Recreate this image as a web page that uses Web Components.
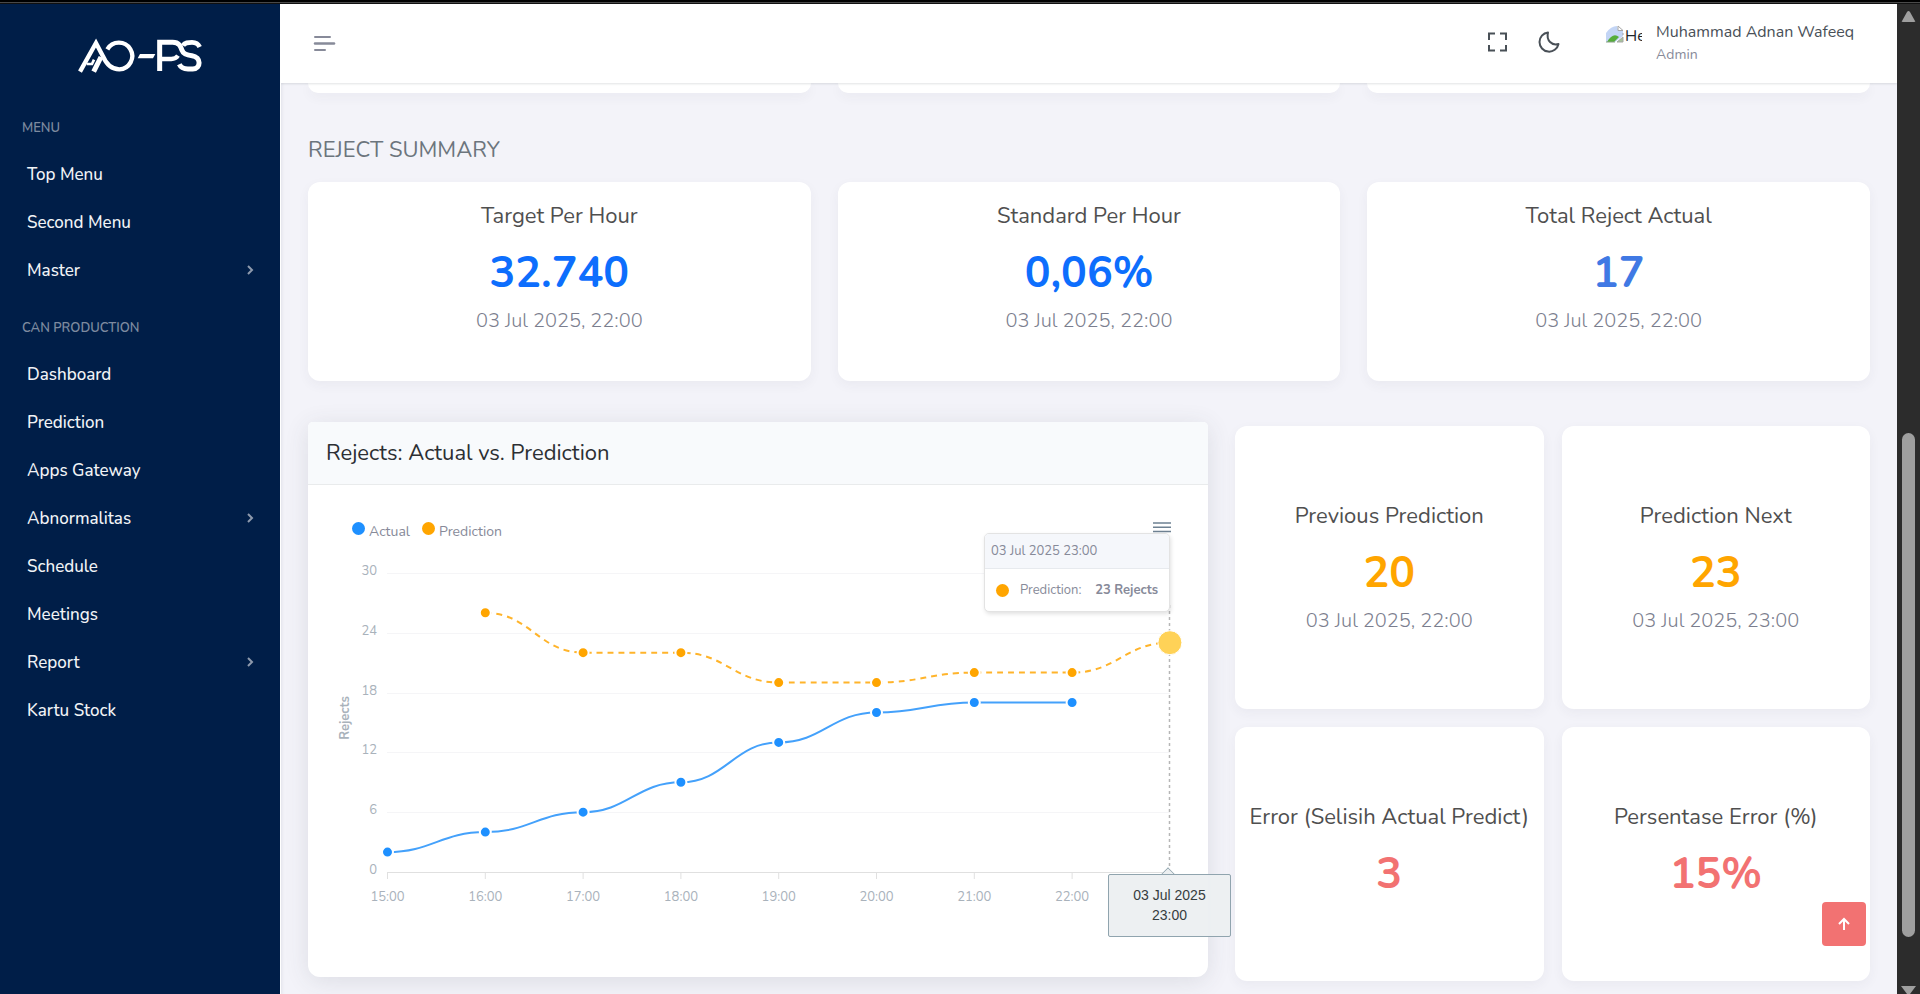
<!DOCTYPE html>
<html lang="en">
<head>
<meta charset="utf-8">
<title>AO-PS Dashboard</title>
<style>
  body { margin: 0; background: #f3f3f9; font-family: Nunito, "Open Sans", "Noto Sans", sans-serif; color: #495057; }
</style>
</head>
<body>
<ao-app></ao-app>

<script>
const define = (name, html, setup) => customElements.define(name, class extends HTMLElement {
  connectedCallback() {
    if (this.shadowRoot) return;
    const t = document.createElement('template');
    t.innerHTML = typeof html === 'function' ? html(this) : html;
    this.attachShadow({ mode: 'open' }).append(t.content.cloneNode(true));
    if (setup) setup(this);
  }
});

define('ao-logo', `
  <style>:host { display: block; } svg { display: block; }</style>
  <svg width="160" height="60" viewBox="0 0 480 180" fill="none" stroke="#fff" stroke-width="13" role="img" aria-label="AO-PS">
    <path d="M60 140 L108 54 L128 92 C138 116 154 133 178 133 A40 40 0 1 0 142 73" stroke-linejoin="miter"/>
    <path d="M101 140 L123 96" stroke-width="15"/>
    <path d="M80 117 L96 117 L102 104" stroke-width="8"/>
    <path d="M240 87 H286 L279 100 H233 Z" fill="#fff" stroke="none"/>
    <path d="M299 138 V52 H338 C358 52 362 64 366 76 C370 88 384 91 396 92 C424 96 424 131 398 132 H384 C370 132 362 127 358 118" stroke-width="15"/>
    <path d="M304 102 H334 C344 102 350 98 354 92" stroke-width="13"/>
    <path d="M369 62 C374 52 384 52 396 52 C408 52 415 57 419 66" stroke-width="14"/>
  </svg>`);

define('nav-label', `
  <style>:host { display: block; margin: 24px 0 12px; padding-left: 22px; font-size: 13px; line-height: 20px; font-weight: 600; color: #7d8a9f; text-transform: uppercase; }</style>
  <slot></slot>`);

define('nav-item', el => `
  <style>
    :host { display: block; }
    a { display: flex; align-items: center; justify-content: space-between; height: 48px; padding: 0 26px 0 27px; color: #f1f3f6; text-decoration: none; font-size: 17px; font-weight: 500; }
    svg { display: block; }
  </style>
  <a href="#"><span><slot></slot></span>${el.hasAttribute('more') ? `<svg width="8" height="12" viewBox="0 0 8 12" fill="none" stroke="#8e9aad" stroke-width="2"><path d="M2 2 L6 6 L2 10"/></svg>` : ''}</a>`);

define('ao-sidebar', `
  <style>
    :host { display: block; background: #001e48; border-right: 1px solid #fff; box-shadow: 0 2px 4px rgba(15,34,58,.12); position: relative; z-index: 1; }
    ao-logo { padding: 21px 0 13px 60px; }
    nav-label:first-of-type { margin-top: 0; padding-top: 20px; }
  </style>
  <nav aria-label="Main">
    <ao-logo></ao-logo>
    <nav-label>Menu</nav-label>
    <nav-item>Top Menu</nav-item><nav-item>Second Menu</nav-item><nav-item more>Master</nav-item>
    <nav-label>Can Production</nav-label>
    <nav-item>Dashboard</nav-item><nav-item>Prediction</nav-item><nav-item>Apps Gateway</nav-item>
    <nav-item more>Abnormalitas</nav-item><nav-item>Schedule</nav-item><nav-item>Meetings</nav-item>
    <nav-item more>Report</nav-item><nav-item>Kartu Stock</nav-item>
  </nav>`);

define('ao-topbar', `
  <style>
    :host { display: flex; align-items: center; height: 79px; padding: 0 43px 0 32px; box-sizing: border-box; background: #fff; box-shadow: 0 1px 2px rgba(56,65,74,.15); position: relative; z-index: 1; }
    button { border: 0; background: none; padding: 0; margin: 0; display: block; font: inherit; color: inherit; }
    svg { display: block; }
    .end { margin-left: auto; display: flex; align-items: center; }
    .tool { margin-right: 30px; padding-bottom: 4px; }
    .tool + .tool { margin-right: 46px; }
    .user { display: flex; gap: 14px; text-align: left; }
    .avatar { display: flex; width: 36px; height: 36px; gap: 1px; overflow: hidden; font-size: 16px; line-height: 22px; color: #212529; padding-top: 4px; box-sizing: border-box; }
    .avatar svg { flex: none; }
    .name { display: block; font-size: 16px; line-height: 22px; color: #495057; }
    .role { display: block; font-size: 14px; line-height: 24px; color: #878a99; }
  </style>
  <button aria-label="Toggle menu"><svg width="24" height="20" viewBox="0 0 24 20" stroke="#878a99" stroke-width="2" stroke-linecap="round"><path d="M2 3 H17 M2 16 H12"/><path d="M2 9.500 H21" stroke-width="2.500"/></svg></button>
  <div class="end">
    <button class="tool" aria-label="Fullscreen"><svg width="21" height="20" viewBox="0 0 21 20" fill="none" stroke="#495057" stroke-width="2"><path d="M2 8 V1.500 H8 M13 1.500 H19 V8 M19 13 V18.500 H13 M8 18.500 H2 V13"/></svg></button>
    <button class="tool" aria-label="Dark mode"><svg width="22" height="22" viewBox="0 0 22 22" fill="none" stroke="#495057" stroke-width="2" stroke-linejoin="round"><path d="M10 1.500 A9.600 9.600 0 1 0 20.500 13 C14 15 8 9.500 10 1.500 Z"/></svg></button>
    <button class="user">
      <span class="avatar"><svg width="18" height="18" viewBox="0 0 18 18"><path d="M0 17 V8 Q5 1 11 1 L12 5 L17 6 V11 L9 17 Z" fill="#c3d5f5"/><path d="M12 1 L17 5.500 H12 Z" fill="#fff" stroke="#a6a6a6" stroke-width="1"/><path d="M1 17 Q7 7 13 12 L8 17 Z" fill="#55ad3a"/><path d="M17 8 V10 M11 17 H17 V12 Z" fill="#a6c49a" stroke="#a6a6a6"/><path d="M0 17 H9" stroke="#8aa08a"/></svg><span>He</span></span>
      <span><span class="name">Muhammad Adnan Wafeeq</span><span class="role">Admin</span></span>
    </button>
  </div>`);

define('stat-card', el => `
  <style>
    :host { display: block; box-sizing: border-box; background: #fff; border-radius: 12px; box-shadow: 0 4px 12px rgba(56,65,74,.05); padding: var(--pad, 21px 0 45px); text-align: center; }
    h3 { margin: 0; font-size: 22px; line-height: 26px; font-weight: 400; color: #4f4f4f; white-space: nowrap; }
    .value { margin: 18px 0 6px; font-size: 43px; line-height: 53px; font-weight: 700; color: var(--tone, #0d6efd); }
    .time { font-size: 20px; line-height: 30px; font-weight: 300; color: #7b7e8e; }
    p { margin: 0; }
  </style>
  <h3>${el.getAttribute('label')}</h3>
  <p class="value"><slot></slot></p>
  ${el.hasAttribute('time') ? `<p class="time">${el.getAttribute('time')}</p>` : ''}`);

const X = i => 79.5 + i * 97.8;
const Y = v => 317 - v * 9.97;
const smooth = pts => pts.map(([i, v], k) => {
  if (!k) return `M${X(i)} ${Y(v)}`;
  const [pi, pv] = pts[k - 1], d = (X(i) - X(pi)) * 0.45;
  return `C${X(pi) + d} ${Y(pv)} ${X(i) - d} ${Y(v)} ${X(i)} ${Y(v)}`;
}).join(' ');
const dots = (pts, color) => pts.map(([i, v]) => `<circle cx="${X(i)}" cy="${Y(v)}" r="5.500" fill="${color}" stroke="#fff" stroke-width="2"/>`).join('');
const actual = [2, 4, 6, 9, 13, 16, 17, 17].map((v, i) => [i, v]);
const predicted = [26, 22, 22, 19, 19, 20, 20, 23].map((v, i) => [i + 1, v]);

define('reject-chart', `
  <style>
    :host { display: block; position: relative; }
    .top { display: flex; justify-content: space-between; padding: 36px 35px 0 44px; height: 70px; box-sizing: border-box; }
    ul { display: flex; gap: 12px; margin: 0; padding: 0; list-style: none; font-size: 14px; line-height: 22px; color: #878a99; }
    li { display: flex; gap: 4px; }
    i { flex: none; width: 13px; height: 13px; margin-top: 1px; border-radius: 50%; background: var(--c); }
    button { border: 0; background: none; padding: 0; height: 14px; }
    svg { display: block; }
    .plot { width: 100%; height: auto; font-family: inherit; }
    .tip { position: absolute; top: 48px; right: 38px; width: 186px; box-sizing: border-box; border: 1px solid #e3e3e3; border-radius: 5px; background: #fff; box-shadow: 1px 2px 4px rgba(0,0,0,.12); font-size: 13px; line-height: 18px; color: #878a99; overflow: hidden; white-space: nowrap; }
    .tip header { padding: 8px 6px; background: #f5f7fb; border-bottom: 1px solid #e7eaee; }
    .tip div { display: flex; align-items: center; height: 42px; padding: 0 11px 0 10px; }
    .tip i { margin: 0 11px 0 1px; }
    .tip b { margin-left: auto; font-weight: 700; }
    .xtip { position: absolute; top: 389px; left: 800px; width: 123px; box-sizing: border-box; padding: 10px 20px 11px; border: 1px solid #90a4ae; border-radius: 2px; background: rgba(236,239,241,.96); font: 14px/20px "Liberation Sans", Arial, sans-serif; color: #373d3f; text-align: center; }
    .xtip::before { content: ""; position: absolute; left: 54px; top: -6px; width: 9px; height: 9px; background: #eceff1; border: solid #90a4ae; border-width: 1px 0 0 1px; transform: rotate(45deg); clip-path: polygon(0 0, 100% 0, 0 100%); }
  </style>
  <div class="top">
    <ul><li style="--c:#1e90ff"><i></i>Actual</li><li style="--c:#ffa500"><i></i>Prediction</li></ul>
    <button aria-label="Chart menu"><svg width="22" height="14" viewBox="0 0 22 14" stroke="#6e8192" stroke-width="1.500"><path d="M2 2 H20 M2 6.300 H20 M2 10.600 H20"/></svg></button>
  </div>
  <svg class="plot" viewBox="0 0 900 422" font-size="13" fill="#a9b2bb">
    <g stroke="#f5f5f7">${[6, 12, 18, 24, 30].map(v => `<path d="M79 ${Math.round(Y(v)) + .5} H862"/>`).join('')}</g>
    <g stroke="#e0e0e0"><path d="M79 317.500 H862"/>${[0, 1, 2, 3, 4, 5, 6, 7].map(i => `<path d="M${X(i)} 318 V324"/>`).join('')}</g>
    <g text-anchor="end">${[0, 6, 12, 18, 24, 30].map(v => `<text x="69" y="${Math.round(Y(v)) + 2}">${v}</text>`).join('')}</g>
    <g text-anchor="middle">${[15, 16, 17, 18, 19, 20, 21, 22].map((h, i) => `<text x="${X(i)}" y="346">${h}:00</text>`).join('')}
      <text transform="translate(41 163) rotate(-90)" font-weight="700">Rejects</text></g>
    <path d="M861.500 50 V314" stroke="#b6b6b6" stroke-dasharray="3" stroke-width="1.500"/>
    <path d="${smooth(actual)}" fill="none" stroke="#44a1fb" stroke-width="2"/>
    <path d="${smooth(predicted)}" fill="none" stroke="#ffb42b" stroke-width="2" stroke-dasharray="6 5"/>
    ${dots(actual, '#1e90ff')}${dots(predicted.slice(0, -1), '#ffa500')}
    <circle cx="${X(8)}" cy="${Y(23)}" r="12" fill="#ffd257" stroke="#fff"/>
  </svg>
  <div class="tip"><header>03 Jul 2025 23:00</header><div style="--c:#ffa500"><i></i><span>Prediction:</span><b>23 Rejects</b></div></div>
  <div class="xtip">03 Jul 2025 23:00</div>`);

define('chart-card', `
  <style>
    :host { display: block; background: #fff; border-radius: 5px 5px 12px 12px; box-shadow: 0 4px 24px rgba(56,65,74,.12); }
    h3 { margin: 0; padding: 18px; font-size: 22px; line-height: 26px; font-weight: 400; color: #2c2f33; background: #f8fafc; border-bottom: 1px solid #e9ebec; border-radius: 5px 5px 0 0; }
  </style>
  <h3><slot name="title"></slot></h3><slot></slot>`);

define('ao-scrollbar', `
  <style>
    :host { display: flex; flex-direction: column; background: #2c2c2c; height: 100%; align-items: center; padding-top: 7px; box-sizing: border-box; overflow: hidden; }
    svg { display: block; flex: none; }
    .before { flex: 411; } .thumb { flex: 505; width: 13px; border-radius: 7px; background: #9f9f9f; } .after { flex: 49; }
  </style>
  <svg width="15" height="12" viewBox="0 0 15 12" fill="#9f9f9f"><path d="M1 10 Q0 11 2 11 H13 Q15 11 14 10 L9 1 Q7.500 -1 6 1 Z"/></svg>
  <div class="before"></div><div class="thumb"></div><div class="after"></div>
  <svg width="15" height="8" viewBox="0 0 15 8" fill="#9f9f9f"><path d="M0 0 H15 L9 8 H6 Z"/></svg>`);

define('ao-app', `
  <style>
    :host { display: flex; flex-direction: column; height: 100vh; overflow: hidden; }
    .edge { flex: none; height: 4px; box-sizing: border-box; background: #000; border-bottom: 1px solid #111; box-shadow: inset 0 -1px #4a4a4a; }
    .shell { flex: 1; min-height: 0; display: grid; grid-template-columns: 281px minmax(0,1fr) 23px; }
    .page { overflow: hidden; }
    main { padding: 0 27px; }
    .three { display: grid; grid-template-columns: repeat(3, 1fr); gap: 27px; }
    .tail { height: 10px; background: #fff; border-radius: 0 0 12px 12px; box-shadow: 0 4px 12px rgba(56,65,74,.05); }
    h2 { margin: 44px 0 19px; font-size: 22px; line-height: 26px; font-weight: 400; color: #6c757d; text-transform: uppercase; }
    .lower { display: grid; grid-template-columns: minmax(0,900fr) minmax(0,635fr); gap: 27px; margin-top: 41px; align-items: start; }
    .four { display: grid; grid-template-columns: repeat(2, minmax(0,1fr)); gap: 18px; padding-top: 4px; }
    .four stat-card { --pad: 77px 0 73px; --tone: #ffa500; }
    .four .err { --pad: 77px 0 74px; --tone: #f27272; }
    .up { position: fixed; right: 54px; bottom: 48px; width: 44px; height: 44px; padding: 0; border: 0; border-radius: 4px; background: #f27272; display: grid; place-items: center; }
  </style>
  <div class="edge"></div>
  <div class="shell">
    <ao-sidebar></ao-sidebar>
    <div class="page">
      <ao-topbar></ao-topbar>
      <main>
        <div class="three"><div class="tail"></div><div class="tail"></div><div class="tail"></div></div>
        <h2>Reject Summary</h2>
        <div class="three">
          <stat-card label="Target Per Hour" time="03 Jul 2025, 22:00">32.740</stat-card>
          <stat-card label="Standard Per Hour" time="03 Jul 2025, 22:00">0,06%</stat-card>
          <stat-card label="Total Reject Actual" time="03 Jul 2025, 22:00" style="--tone:#4079e4">17</stat-card>
        </div>
        <div class="lower">
          <chart-card><span slot="title">Rejects: Actual vs. Prediction</span><reject-chart></reject-chart></chart-card>
          <div class="four">
            <stat-card label="Previous Prediction" time="03 Jul 2025, 22:00">20</stat-card>
            <stat-card label="Prediction Next" time="03 Jul 2025, 23:00">23</stat-card>
            <stat-card class="err" label="Error (Selisih Actual Predict)">3</stat-card>
            <stat-card class="err" label="Persentase Error (%)">15%</stat-card>
          </div>
        </div>
      </main>
    </div>
    <ao-scrollbar></ao-scrollbar>
  </div>
  <button class="up" aria-label="Back to top"><svg width="12" height="14" viewBox="0 0 12 14" fill="none" stroke="#fff" stroke-width="2"><path d="M6 13 V2 M1 7 L6 2 L11 7"/></svg></button>`);
</script>
</body>
</html>
